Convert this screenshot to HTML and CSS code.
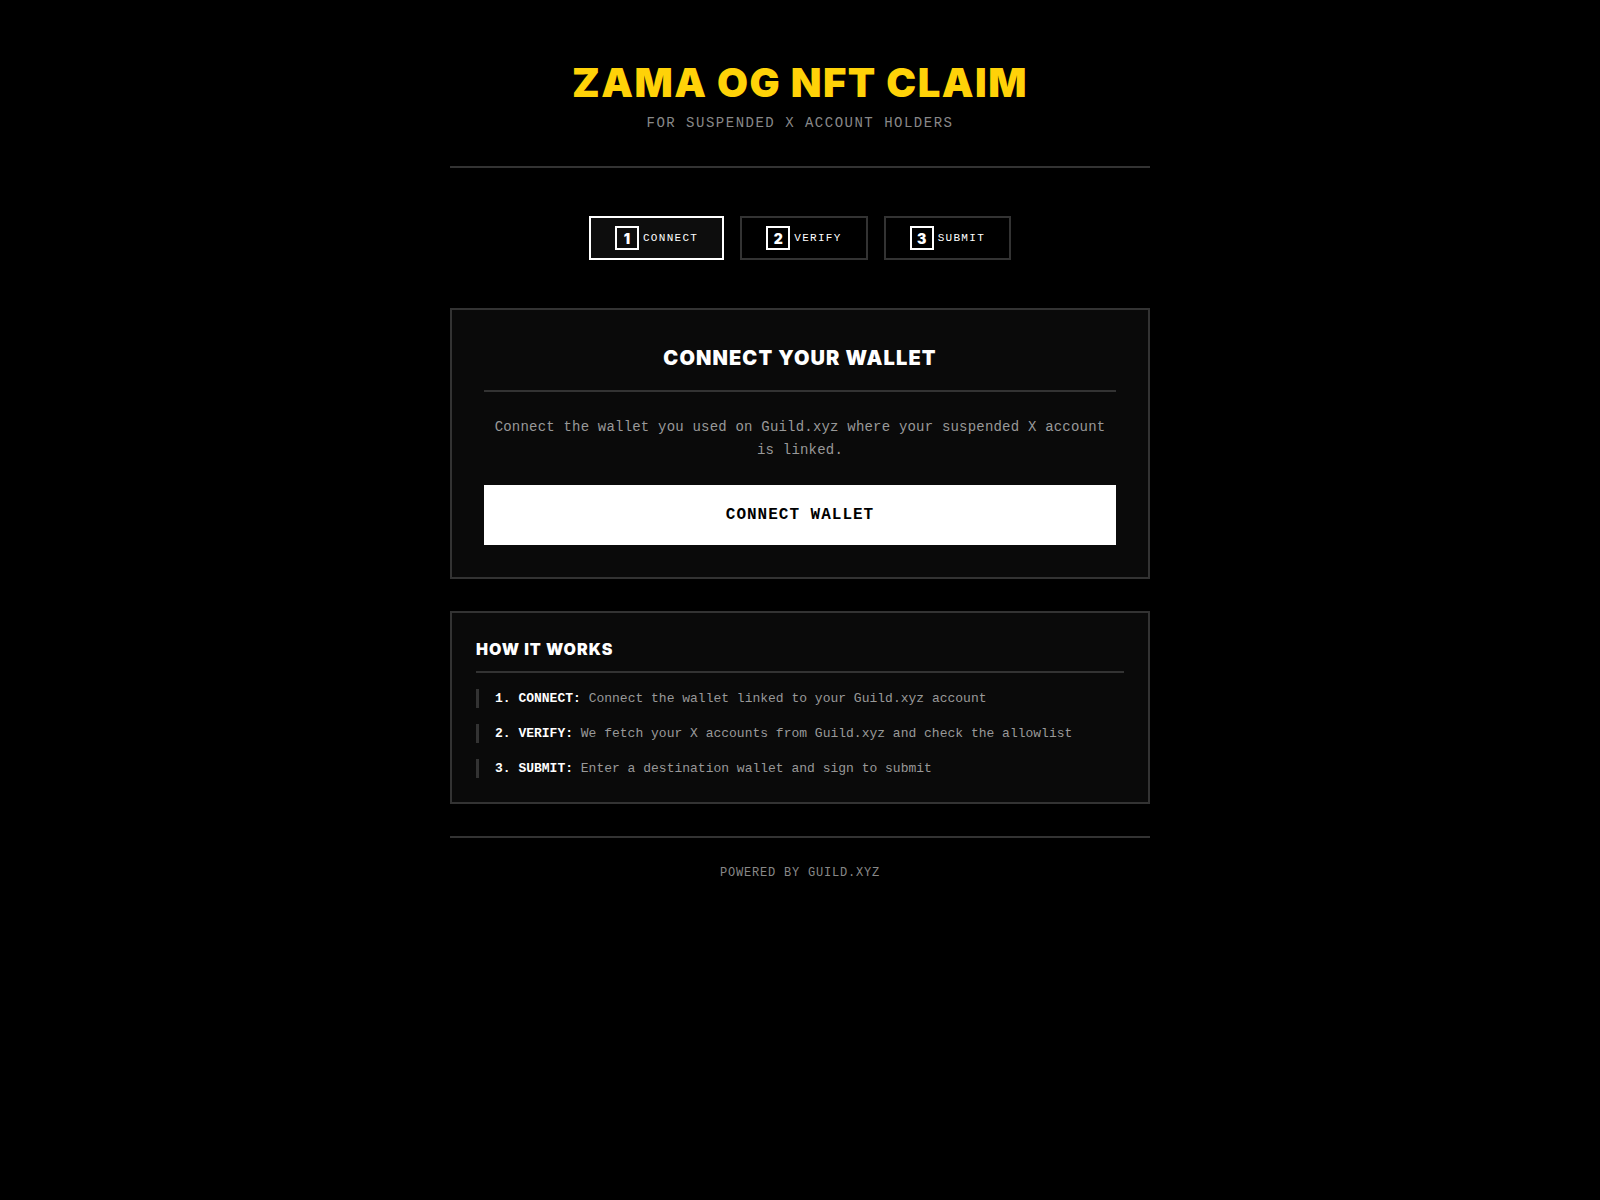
FILE: index.html
```html
<!DOCTYPE html>
<html lang="en">
  <head>
    <meta charset="UTF-8" />
    <meta name="viewport" content="width=device-width, initial-scale=1.0" />
    <title>Zama OG NFT Claim</title>
    <link rel="stylesheet" href="styles.css">
  </head>
  <body>
    <div class="container">
      <header class="header">
        <h1>ZAMA OG NFT CLAIM</h1>
        <p class="subtitle">FOR SUSPENDED X ACCOUNT HOLDERS</p>
      </header>

      <nav class="steps">
        <div class="step active"><span class="step-num">1</span><span class="step-label">CONNECT</span></div>
        <div class="step"><span class="step-num">2</span><span class="step-label">VERIFY</span></div>
        <div class="step"><span class="step-num">3</span><span class="step-label">SUBMIT</span></div>
      </nav>

      <section class="card wallet-card">
        <h2>CONNECT YOUR WALLET</h2>
        <p class="card-text">Connect the wallet you used on Guild.xyz where your suspended X account is linked.</p>
        <button type="button" class="btn-primary">CONNECT WALLET</button>
      </section>

      <section class="card info-card">
        <h3>HOW IT WORKS</h3>
        <ol class="how-list">
          <li><strong>1. CONNECT:</strong> Connect the wallet linked to your Guild.xyz account</li>
          <li><strong>2. VERIFY:</strong> We fetch your X accounts from Guild.xyz and check the allowlist</li>
          <li><strong>3. SUBMIT:</strong> Enter a destination wallet and sign to submit</li>
        </ol>
      </section>

      <footer class="footer">POWERED BY GUILD.XYZ</footer>
    </div>
  </body>
</html>
```

FILE: styles.css
```css
body {
  margin: 0;
  background: #000;
  color: #fff;
  font-family: "Liberation Mono", "DejaVu Sans Mono", monospace;
}

.container {
  width: 700px;
  margin: 0 auto;
}

.header {
  text-align: center;
  padding-top: 59px;
  padding-bottom: 33px;
  border-bottom: 2px solid #333;
}

h1 {
  margin: 0;
  font-family: Inter, "Roboto", sans-serif;
  font-weight: 900;
  font-size: 40px;
  line-height: 48px;
  letter-spacing: 1.5px;
  color: #ffd208;
}

.subtitle {
  margin: 6px 0 0;
  font-size: 14px;
  line-height: 20px;
  letter-spacing: 1.5px;
  color: #888;
}

.steps {
  display: flex;
  justify-content: center;
  gap: 16px;
  margin-top: 48px;
}

.step {
  display: flex;
  align-items: center;
  gap: 4px;
  padding: 8px 24px;
  border: 2px solid #333;
}

.step.active {
  border-color: #fff;
  background: #0d0d0d;
}

.step-num {
  width: 20px;
  height: 20px;
  border: 2px solid #fff;
  display: flex;
  align-items: center;
  justify-content: center;
  font-family: Inter, sans-serif;
  font-weight: 900;
  font-size: 14px;
}

.step-label {
  font-size: 11px;
  letter-spacing: 1.3px;
  color: #fff;
}

.card {
  background: #0a0a0a;
  border: 2px solid #333;
}

.wallet-card {
  margin-top: 48px;
  padding: 36px 32px 32px;
  text-align: center;
}

.wallet-card h2 {
  margin: 0;
  padding-bottom: 20px;
  border-bottom: 2px solid #333;
  font-family: Inter, sans-serif;
  font-weight: 900;
  font-size: 20px;
  line-height: 24px;
  letter-spacing: 1.1px;
}

.card-text {
  margin: 24px 0;
  font-size: 14px;
  line-height: 22.5px;
  letter-spacing: 0.2px;
  color: #999;
}

.btn-primary {
  display: block;
  width: 100%;
  height: 60px;
  border: none;
  background: #fff;
  color: #000;
  font-family: "Liberation Mono", monospace;
  font-weight: bold;
  font-size: 16px;
  letter-spacing: 1px;
  cursor: pointer;
}

.info-card {
  margin-top: 32px;
  padding: 26px 24px 24px;
}

.info-card h3 {
  margin: 0;
  padding-bottom: 12px;
  border-bottom: 2px solid #333;
  font-family: Inter, sans-serif;
  font-weight: 900;
  font-size: 16px;
  line-height: 20px;
  letter-spacing: 1px;
}

.how-list {
  list-style: none;
  margin: 16px 0 0;
  padding: 0;
  display: flex;
  flex-direction: column;
  gap: 16px;
}

.how-list li {
  border-left: 3px solid #333;
  padding-left: 16px;
  font-size: 13px;
  line-height: 19px;
  color: #999;
}

.how-list strong {
  color: #fff;
}

.footer {
  margin-top: 32px;
  border-top: 2px solid #333;
  padding-top: 27px;
  text-align: center;
  font-size: 12px;
  line-height: 16px;
  letter-spacing: 0.8px;
  color: #888;
}
```
